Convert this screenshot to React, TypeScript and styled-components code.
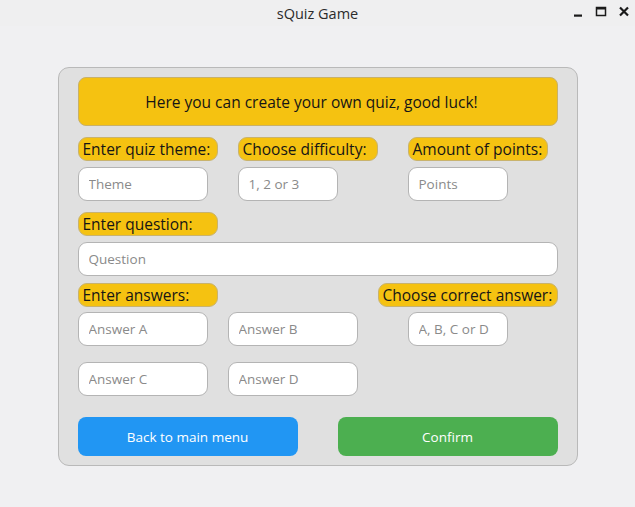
import React from "react";
import styled, { createGlobalStyle } from "styled-components";

const Global = createGlobalStyle`
  html, body { margin: 0; padding: 0; }
  body {
    width: 635px;
    height: 507px;
    overflow: hidden;
    background: #f0f0f2;
    font-family: "Open Sans", "Noto Sans", "DejaVu Sans", sans-serif;
  }
  * { box-sizing: border-box; }
`;

const Window = styled.div`
  width: 635px;
  height: 507px;
  display: flex;
  flex-direction: column;
  background: #f0f0f2;
`;

const TitleBar = styled.div`
  height: 26px;
  flex: none;
  display: flex;
  align-items: center;
  justify-content: center;
  position: relative;
  background: #efeff0;
  color: #2b2b2b;
  font-size: 14.5px;
  font-weight: 500;
`;

const Controls = styled.div`
  position: absolute;
  right: 5px;
  top: 6px;
  display: flex;
  gap: 11px;
  align-items: center;
`;

const Body = styled.div`
  flex: 1;
  display: flex;
  justify-content: center;
  padding-top: 41px;
`;

const Panel = styled.div`
  width: 520px;
  height: 399px;
  background: #e0e0e0;
  border: 1px solid #b9b9b9;
  border-radius: 11px;
  padding: 9px 19px;
  display: flex;
  flex-direction: column;
`;

const Banner = styled.div`
  height: 49px;
  flex: none;
  background: #f5c211;
  border: 1px solid #c8b16a;
  border-radius: 8px;
  padding-right: 12px;
  display: flex;
  align-items: center;
  justify-content: center;
  font-size: 15.5px;
  color: #151515;
`;

const Label = styled.div<{ $w: number; $mt?: number }>`
  width: ${(p) => p.$w}px;
  height: 24px;
  margin-top: ${(p) => p.$mt ?? 0}px;
  background: #f5c211;
  border: 1px solid #c9b36d;
  border-radius: 9px;
  padding-left: 4px;
  display: flex;
  align-items: center;
  font-size: 15.5px;
  color: #151515;
  white-space: nowrap;
`;

const Input = styled.input<{ $w: number | string; $mt?: number; $ml?: number }>`
  width: ${(p) => (typeof p.$w === "number" ? `${p.$w}px` : p.$w)};
  height: 34px;
  margin-top: ${(p) => p.$mt ?? 0}px;
  margin-left: ${(p) => p.$ml ?? 0}px;
  background: #ffffff;
  border: 1px solid #b4b4b4;
  border-radius: 9px;
  padding: 0 10px;
  font-family: inherit;
  font-size: 13.5px;
  color: #222;
  outline: none;
  &::placeholder { color: #8a8a8a; }
`;

const FieldRow = styled.div<{ $cols: string; $mt: number }>`
  display: grid;
  grid-template-columns: ${(p) => p.$cols};
  margin-top: ${(p) => p.$mt}px;
  align-items: start;
`;

const Field = styled.div`
  display: flex;
  flex-direction: column;
`;

const Buttons = styled.div`
  display: flex;
  justify-content: space-between;
  margin-top: 21px;
`;

const Button = styled.button<{ $bg: string }>`
  width: 220px;
  height: 39px;
  border: none;
  border-radius: 8px;
  background: ${(p) => p.$bg};
  color: #ffffff;
  font-family: inherit;
  font-size: 13.5px;
  cursor: pointer;
`;

export default function App() {
  return (
    <Window>
      <Global />
      <TitleBar>
        sQuiz Game
        <Controls>
          <svg width="12" height="12" viewBox="0 0 12 12">
            <rect x="2" y="8.5" width="8" height="2.2" fill="#1a1a1a" />
          </svg>
          <svg width="12" height="12" viewBox="0 0 12 12">
            <rect x="1.5" y="1.5" width="9" height="8" fill="none" stroke="#1a1a1a" strokeWidth="1.5" />
            <rect x="1.5" y="1.5" width="9" height="2" fill="#1a1a1a" />
          </svg>
          <svg width="12" height="12" viewBox="0 0 12 12">
            <path d="M2 1.5 L10 9.5 M10 1.5 L2 9.5" stroke="#1a1a1a" strokeWidth="2.2" />
          </svg>
        </Controls>
      </TitleBar>
      <Body>
        <Panel>
          <Banner>Here you can create your own quiz, good luck!</Banner>

          <FieldRow $cols="160px 170px 1fr" $mt={11}>
            <Field>
              <Label $w={140}>Enter quiz theme:</Label>
              <Input $w={130} $mt={6} placeholder="Theme" />
            </Field>
            <Field>
              <Label $w={140}>Choose difficulty:</Label>
              <Input $w={100} $mt={6} placeholder="1, 2 or 3" />
            </Field>
            <Field>
              <Label $w={140}>Amount of points:</Label>
              <Input $w={100} $mt={6} placeholder="Points" />
            </Field>
          </FieldRow>

          <Field>
            <Label $w={140} $mt={11}>Enter question:</Label>
            <Input $w="100%" $mt={6} placeholder="Question" />
          </Field>

          <FieldRow $cols="150px 150px 1fr" $mt={7}>
            <Label $w={140}>Enter answers:</Label>
            <span />
            <Label $w={180}>Choose correct answer:</Label>
          </FieldRow>

          <FieldRow $cols="150px 150px 1fr" $mt={5}>
            <Input $w={130} placeholder="Answer A" />
            <Input $w={130} placeholder="Answer B" />
            <Input $w={100} $ml={30} placeholder="A, B, C or D" />
          </FieldRow>

          <FieldRow $cols="150px 150px 1fr" $mt={16}>
            <Input $w={130} placeholder="Answer C" />
            <Input $w={130} placeholder="Answer D" />
          </FieldRow>

          <Buttons>
            <Button $bg="#2196f3">Back to main menu</Button>
            <Button $bg="#4caf50">Confirm</Button>
          </Buttons>
        </Panel>
      </Body>
    </Window>
  );
}
